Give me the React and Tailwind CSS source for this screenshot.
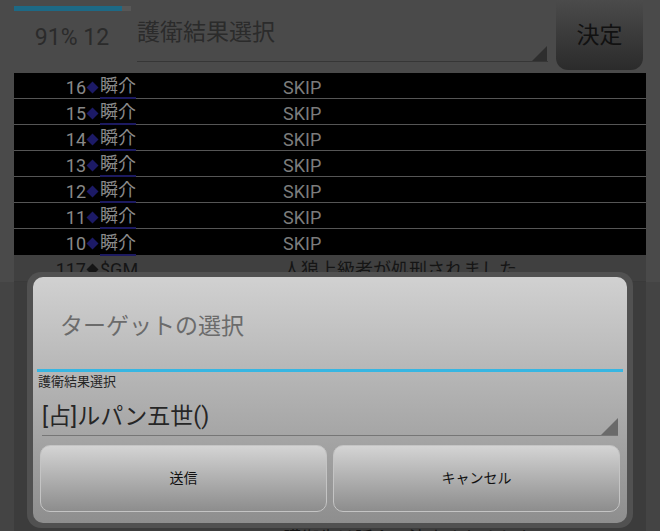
import React from 'react';

const rows = [16, 15, 14, 13, 12, 11, 10];

const Corner = ({ size, color }) => (
  <svg width={size} height={size} viewBox={`0 0 ${size} ${size}`}>
    <polygon points={`${size},0 ${size},${size} 0,${size}`} fill={color} />
  </svg>
);

const Diamond = ({ color }) => (
  <svg width="13" height="13" viewBox="0 0 13 13" className="shrink-0">
    <polygon points="6.5,0.5 12.5,6.5 6.5,12.5 0.5,6.5" fill={color} />
  </svg>
);

const LogRow = ({ no }) => (
  <div className="flex h-[26px] items-center border-b border-[#555] pt-[3px] last:border-b-0">
    <div className="flex w-[269px] items-center">
      <span className="w-[72px] text-right text-[#888]">{no}</span>
      <Diamond color="#1c1a66" />
      <span className="ml-[1px] h-[24px] border-b-[2px] border-[#1c1a60] leading-[22px] text-[#8a8a8a]">瞬介</span>
    </div>
    <span className="text-[#7c7c7c]">SKIP</span>
  </div>
);

export default function App() {
  return (
    <div className="relative h-[531px] w-[660px] overflow-hidden bg-[#4a4a4a] font-['Roboto','Noto_Sans_CJK_JP',sans-serif]">

      {/* top bar */}
      <div className="flex h-[73px]">
        <div className="w-[130px] pl-[14px] pt-[6px]">
          <div className="flex h-[5px] w-[117px] bg-[#575757]">
            <div className="w-[108px] bg-[#1d6985]" />
          </div>
          <div className="flex h-[52px] items-center justify-center pt-[2px] text-[23px] text-[#2b2b2b]">91% 12</div>
        </div>

        <div className="relative ml-[7px] flex h-[62px] w-[411px] items-center border-b border-[#363636] pt-[5px] text-[23px] text-[#2b2b2b]">
          護衛結果選択
          <div className="absolute bottom-0 right-[1px] flex">
            <Corner size={15} color="#2e2e2e" />
          </div>
        </div>

        <button className="ml-[8px] flex h-[70px] w-[87px] items-center justify-center rounded-b-[12px] bg-gradient-to-b from-[#4b4b4b] to-[#2b2b2b] pt-[2px] text-[23px] text-[#111]">
          決定
        </button>
      </div>

      {/* log list */}
      <div className="mx-[14px] bg-black text-[18px]">
        {rows.map((n) => (
          <LogRow key={n} no={n} />
        ))}
      </div>
      <div className="mx-[14px] flex h-[27px] items-center border-b border-[#3a3a3a] bg-[#404040] pt-[2px] text-[18px] text-[#151515]">
        <div className="flex w-[269px] items-center">
          <span className="w-[72px] text-right">117</span>
          <Diamond color="#151515" />
          <span className="ml-[1px]">$GM</span>
        </div>
        <span>人狼上級者が処刑されました</span>
      </div>
      <div className="h-[260px] bg-[#444]">
        <div className="mx-[14px] h-full bg-[#3c3c3c] pt-[243px] text-[18px] text-[#151515]">
          <div className="pl-[269px]">護衛先は瞬介に決定されました</div>
        </div>
      </div>

      {/* dialog */}
      <div className="absolute left-[27px] top-[272px] h-[256px] w-[606px] rounded-[14px] bg-[#515151] px-[6px] pt-[5px]">
        <div className="flex h-[246px] flex-col rounded-[10px] bg-gradient-to-b from-[#d1d1d1] to-[#8e8e8e]">
          <div className="flex h-[92px] items-center pl-[27px] pt-[8px] text-[23px] text-[#6b6b6b]">ターゲットの選択</div>
          <div className="mx-[4px] h-[3px] bg-[#37b6e2]" />
          <div className="mt-[2px] pl-[5px] text-[13px] leading-[16px] text-[#262626]">護衛結果選択</div>
          <div className="relative mx-[9px] flex h-[46px] items-center border-b border-[#767676] pt-[10px] text-[23px] text-[#262626]">
            [占]ルパン五世()
            <div className="absolute bottom-0 right-0 flex">
              <Corner size={17} color="#6a6a6a" />
            </div>
          </div>
          <div className="mt-[9px] flex h-[67px] gap-[6px] px-[7px]">
            <button className="flex flex-1 items-center justify-center rounded-[10px] border border-[#c4c4c4] bg-gradient-to-b from-[#d4d4d4] to-[#8d8d8d] text-[14px] text-[#111]">
              送信
            </button>
            <button className="flex flex-1 items-center justify-center rounded-[10px] border border-[#c4c4c4] bg-gradient-to-b from-[#d4d4d4] to-[#8d8d8d] text-[14px] text-[#111]">
              キャンセル
            </button>
          </div>
        </div>
      </div>
    </div>
  );
}
